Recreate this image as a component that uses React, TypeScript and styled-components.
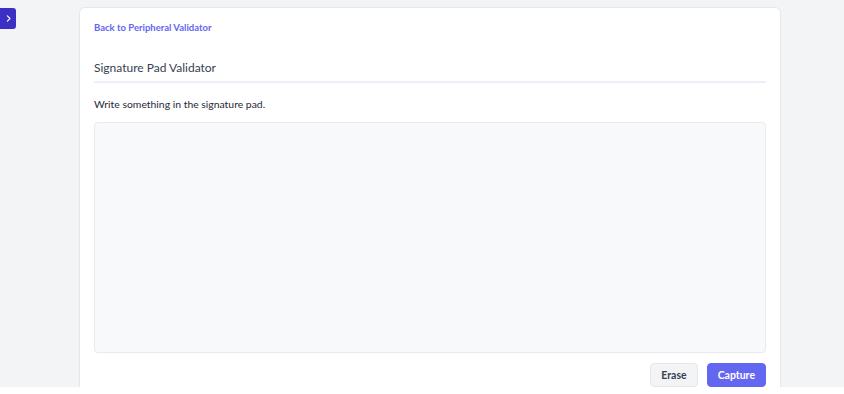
import React from "react";
import styled, { createGlobalStyle } from "styled-components";

const GlobalStyle = createGlobalStyle`
  html, body {
    margin: 0;
    padding: 0;
    background: #ffffff;
  }
  body {
    font-family: Lato, "Noto Sans", sans-serif;
    color: #374151;
  }
`;

const Page = styled.div`
  position: relative;
  height: 387px;
  background: #f3f4f6;
  padding: 8px 0 0 80px;
  box-sizing: border-box;
  overflow: hidden;
`;

const ToggleButton = styled.button`
  position: absolute;
  left: 0;
  top: 8px;
  width: 16px;
  height: 21px;
  padding: 0;
  border: none;
  border-radius: 0 3px 3px 0;
  background: #3b2fc4;
  color: #ffffff;
  display: flex;
  align-items: center;
  justify-content: center;
  cursor: pointer;
`;

const Card = styled.div`
  width: 700px;
  height: 400px;
  box-sizing: border-box;
  background: #ffffff;
  border-radius: 5px;
  box-shadow: 0 0 0 1px #e5e7eb, 0 1px 3px rgba(0, 0, 0, 0.06);
  padding: 13px 14px 0 14px;
  display: flex;
  flex-direction: column;
`;

const BackLink = styled.a`
  font-size: 9.5px;
  font-weight: 700;
  color: #6366f1;
  text-decoration: none;
  line-height: 14px;
  cursor: pointer;
`;

const Title = styled.h2`
  margin: 24px 0 0 0;
  font-size: 12px;
  font-weight: 400;
  color: #374151;
  line-height: 18px;
  padding-bottom: 4px;
  border-bottom: 2px solid #eef0f7;
`;

const Instruction = styled.p`
  margin: 13px 0 0 0;
  font-size: 10.4px;
  line-height: 16px;
  color: #1f2937;
`;

const Pad = styled.div`
  margin-top: 10px;
  height: 231px;
  background: #f8f9fb;
  border: 1px solid #e8eaef;
  border-radius: 4px;
  box-sizing: border-box;
`;

const Actions = styled.div`
  display: flex;
  justify-content: flex-end;
  gap: 9px;
  margin-top: 10px;
`;

const ActionButton = styled.button<{ $primary?: boolean }>`
  height: 24px;
  padding: 0 10px;
  border-radius: 4px;
  font-family: Lato, "Noto Sans", sans-serif;
  font-size: 10.5px;
  font-weight: 700;
  cursor: pointer;
  border: 1px solid ${(p) => (p.$primary ? "#6366f1" : "#e5e7eb")};
  background: ${(p) => (p.$primary ? "#6366f1" : "#f3f4f6")};
  color: ${(p) => (p.$primary ? "#ffffff" : "#374151")};
`;

const App: React.FC = () => {
  return (
    <>
      <GlobalStyle />
      <Page>
        <ToggleButton aria-label="Open sidebar">
          <svg width="9" height="9" viewBox="0 0 24 24" fill="none" stroke="currentColor" strokeWidth="3" strokeLinecap="round" strokeLinejoin="round">
            <path d="M9 5l7 7-7 7" />
          </svg>
        </ToggleButton>
        <Card>
          <BackLink>Back to Peripheral Validator</BackLink>
          <Title>Signature Pad Validator</Title>
          <Instruction>Write something in the signature pad.</Instruction>
          <Pad />
          <Actions>
            <ActionButton>Erase</ActionButton>
            <ActionButton $primary>Capture</ActionButton>
          </Actions>
        </Card>
      </Page>
    </>
  );
};

export default App;
